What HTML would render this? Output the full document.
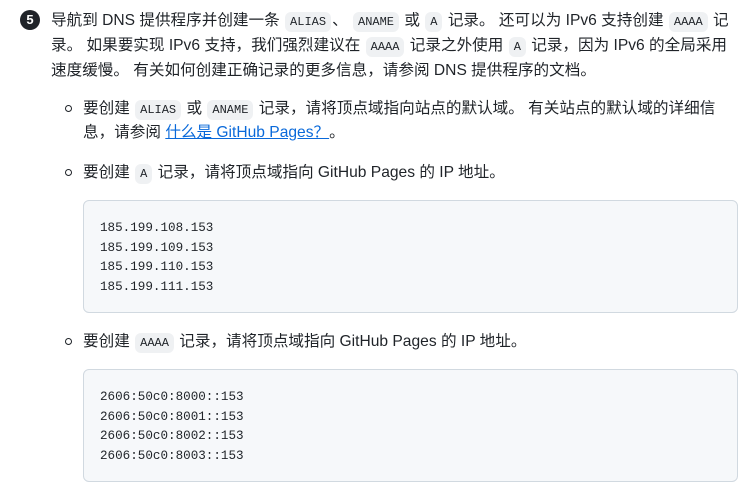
<!DOCTYPE html>
<html><head><meta charset="utf-8"><style>
body{margin:0;width:754px;height:489px;background:#fff;overflow:hidden;font-family:"Liberation Sans","Noto Sans CJK SC",sans-serif;color:#1f2328;font-size:15.6px;position:relative}
.l{position:absolute;white-space:nowrap;line-height:25px}
code{font-family:"Liberation Mono",monospace;font-size:12px;background:#eff1f3;border-radius:6px;padding:3px 5px;margin:0 1px}
.num{position:absolute;left:20px;top:10px;width:20px;height:20px;border-radius:50%;background:#1f2328;color:#fff;font-weight:bold;font-size:13px;text-align:center;line-height:20px}
.b{position:absolute;left:65px;width:5px;height:5px;border:1.2px solid #1f2328;border-radius:50%}
.pre{position:absolute;left:83px;width:655px;background:#f6f8fa;border:1px solid #d1d9e0;border-radius:6px;font-family:"Liberation Mono",monospace;font-size:12.6px;line-height:19.5px;padding:18px 16px;box-sizing:border-box}
a{color:#0969da;text-decoration:underline}
</style></head><body>
<div class="num">5</div>
<div class="l" style="left:51px;top:8px">导航到 DNS 提供程序并创建一条 <code>ALIAS</code>、 <code>ANAME</code> 或 <code>A</code> 记录。 还可以为 IPv6 支持创建 <code>AAAA</code> 记</div>
<div class="l" style="left:51px;top:33px">录。 如果要实现 IPv6 支持，我们强烈建议在 <code>AAAA</code> 记录之外使用 <code>A</code> 记录，因为 IPv6 的全局采用</div>
<div class="l" style="left:51px;top:58px">速度缓慢。 有关如何创建正确记录的更多信息，请参阅 DNS 提供程序的文档。</div>
<div class="b" style="top:105px"></div>
<div class="l" style="left:83px;top:96px">要创建 <code>ALIAS</code> 或 <code>ANAME</code> 记录，请将顶点域指向站点的默认域。 有关站点的默认域的详细信</div>
<div class="l" style="left:83px;top:120px">息，请参阅 <a>什么是 GitHub Pages？</a>。</div>
<div class="b" style="top:169px"></div>
<div class="l" style="left:83px;top:160px">要创建 <code>A</code> 记录，请将顶点域指向 GitHub Pages 的 IP 地址。</div>
<div class="pre" style="top:200px;height:113px">185.199.108.153<br>185.199.109.153<br>185.199.110.153<br>185.199.111.153</div>
<div class="b" style="top:338px"></div>
<div class="l" style="left:83px;top:329px">要创建 <code>AAAA</code> 记录，请将顶点域指向 GitHub Pages 的 IP 地址。</div>
<div class="pre" style="top:369px;height:113px">2606:50c0:8000::153<br>2606:50c0:8001::153<br>2606:50c0:8002::153<br>2606:50c0:8003::153</div>
</body></html>
